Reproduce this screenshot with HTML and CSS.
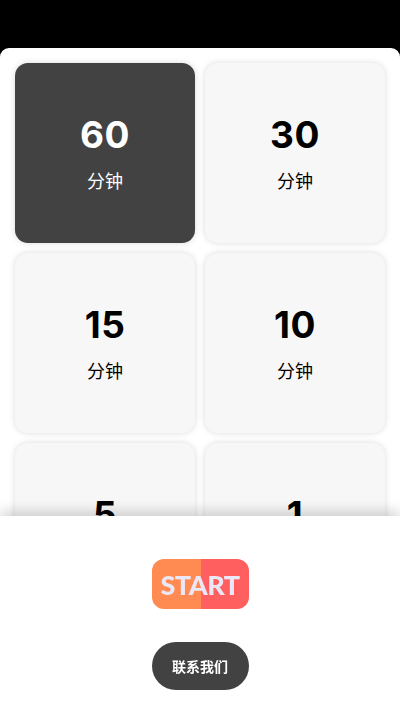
FILE: index.html
```html
<!DOCTYPE html>
<html lang="zh">
<head>
<meta charset="utf-8">
<title>计时</title>
<link rel="stylesheet" href="styles.css">
</head>
<body>
<div class="topbar"></div>
<main class="panel">
  <div class="grid">
    <div class="card card-active"><div class="num">60</div><div class="unit">分钟</div></div>
    <div class="card"><div class="num">30</div><div class="unit">分钟</div></div>
    <div class="card"><div class="num">15</div><div class="unit">分钟</div></div>
    <div class="card"><div class="num">10</div><div class="unit">分钟</div></div>
    <div class="card"><div class="num">5</div><div class="unit">分钟</div></div>
    <div class="card"><div class="num">1</div><div class="unit">分钟</div></div>
  </div>
</main>
<footer class="bottom">
  <button class="start"><span class="start-text">START</span></button>
  <button class="contact">联系我们</button>
</footer>
</body>
</html>
```
FILE: styles.css
```css
html, body {
  margin: 0;
  padding: 0;
  background: #000;
}
body {
  font-family: "Inter", "Noto Sans CJK SC", sans-serif;
  height: 100vh;
  overflow: hidden;
  display: flex;
  flex-direction: column;
}
.topbar {
  height: 48px;
  flex: none;
  background: #000;
}
.panel {
  flex: 1;
  min-height: 0;
  overflow: hidden;
  background: #fff;
  border-radius: 9px 9px 0 0;
  padding: 15px;
}
.grid {
  display: grid;
  grid-template-columns: 180px 180px;
  grid-auto-rows: 180px;
  gap: 10px;
}
.card {
  background: #f7f7f7;
  border-radius: 13px;
  box-shadow: 0 0 6px rgba(0, 0, 0, 0.15);
  display: flex;
  flex-direction: column;
  align-items: center;
  padding-top: 52px;
  box-sizing: border-box;
  color: #000;
}
.card-active {
  background: #424242;
  color: #fff;
}
.num {
  font-family: "Inter", sans-serif;
  font-weight: 700;
  font-size: 37px;
  line-height: 40px;
  letter-spacing: 0.5px;
}
.unit {
  font-family: "Noto Sans CJK SC", sans-serif;
  font-size: 18px;
  line-height: 24px;
  margin-top: 13px;
}
.bottom {
  position: fixed;
  left: 0;
  right: 0;
  bottom: 0;
  height: 194px;
  background: #fff;
  box-shadow: 0 -5px 12px rgba(0, 0, 0, 0.16);
  display: flex;
  flex-direction: column;
  align-items: center;
  padding-top: 43px;
  box-sizing: border-box;
}
.start {
  width: 97px;
  height: 50px;
  border: none;
  border-radius: 12px;
  background: linear-gradient(to right, #ff8a52 0, #ff8a52 50%, #ff5f5f 50%, #ff5f5f 100%);
  padding: 0;
  display: flex;
  align-items: center;
  justify-content: center;
}
.start-text {
  font-family: "Lato", sans-serif;
  font-weight: 900;
  font-size: 27px;
  color: #ebe7f6;
  letter-spacing: -0.5px;
}
.contact {
  margin-top: 33px;
  width: 97px;
  height: 48px;
  border: none;
  border-radius: 24px;
  background: #424242;
  color: #fff;
  font-family: "Noto Sans CJK SC", sans-serif;
  font-weight: 700;
  font-size: 14px;
  padding: 0;
}
```
